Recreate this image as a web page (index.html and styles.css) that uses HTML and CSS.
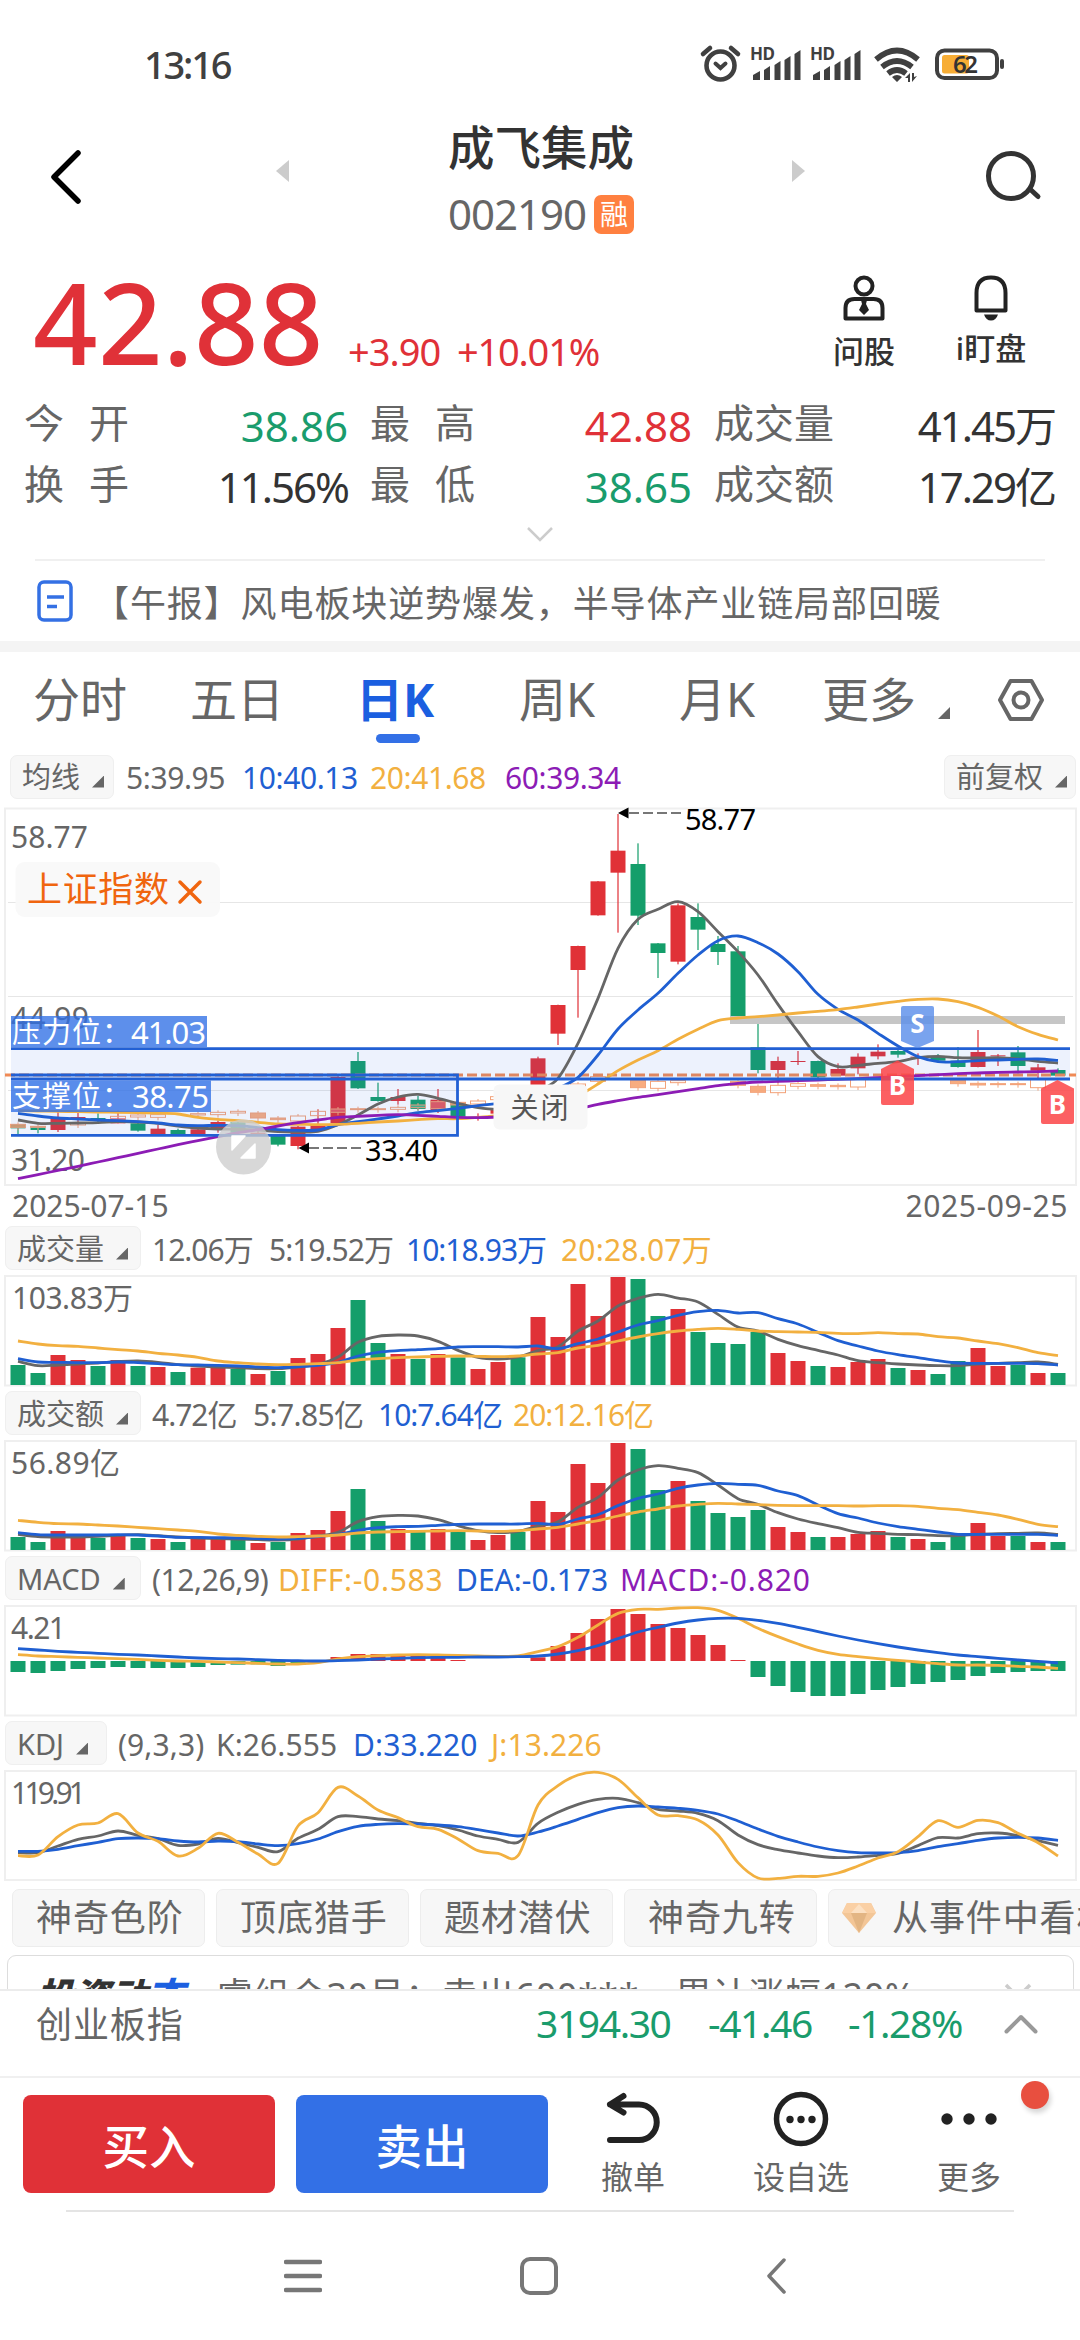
FILE: index.html
```html
<!DOCTYPE html>
<html lang="zh-CN">
<head>
<meta charset="utf-8">
<title>成飞集成 002190</title>
<link rel="stylesheet" href="styles.css">
</head>
<body>
<div class="status">
  <span class="clock">13:16</span>
  <svg class="status-icons" viewBox="690 35 330 60" width="330" height="60">
    <g fill="none" stroke="#404040" stroke-width="4.6" stroke-linecap="round">
      <circle cx="720.5" cy="65.5" r="14"/>
      <path d="M715.5 63.5l5 4.5 5-4.5" stroke-width="4"/>
      <path d="M703 54l7-6M738 54l-7-6"/>
    </g>
    <g id="signal" fill="#404040">
      <path d="M753 80v-5l7-4v9zM764 80v-10l6-4v14zM774.500 80V65l6-4v19zM784.500 80V60l6-4v24zM794.500 80V54l6-4v30z"/>
      <path d="M813 80v-5l7-4v9zM824 80v-10l6-4v14zM834.500 80V65l6-4v19zM844.500 80V60l6-4v24zM854.500 80V54l6-4v30z"/>
    </g>
    <text class="hd" x="750" y="60" textLength="25">HD</text>
    <text class="hd" x="810" y="60" textLength="25">HD</text>
    <g fill="none" stroke="#404040" stroke-width="5.600">
      <path d="M876 59.500q21-18 42 0"/><path d="M882 67q15-12 30 0"/><path d="M888 73.500q9-7 18 0"/>
    </g>
    <path fill="#404040" d="M892 77q5-4 10 0l-5 5zM905 78l5-5v9h-2v-4zM917 76l-5 6v-9h2v4z"/>
    <rect x="937" y="50.500" width="60" height="27.500" rx="7.500" fill="none" stroke="#404040" stroke-width="4"/>
    <rect x="942" y="55" width="27" height="18.500" rx="2.500" fill="#f7ad35"/>
    <rect x="1000" y="59" width="4" height="10" rx="2" fill="#404040"/>
    <text class="battery" x="953" y="73" textLength="25">62</text>
  </svg>
</div>

<header class="head">
  <svg class="back" viewBox="0 0 36 56" width="36" height="56"><path d="M29 4L5 28l24 24" fill="none" stroke="#000" stroke-width="5.500" stroke-linecap="round" stroke-linejoin="round"/></svg>
  <svg class="prev" viewBox="0 0 13 22" width="13" height="22"><path d="M13 0v22L0 11z" fill="#ccc"/></svg>
  <div class="name">
    <h1>成飞集成</h1>
    <div class="code"><span>002190</span><b>融</b></div>
  </div>
  <svg class="next" viewBox="0 0 13 22" width="13" height="22"><path d="M0 0v22l13-11z" fill="#ccc"/></svg>
  <svg class="search" viewBox="0 0 60 56" width="60" height="56"><g fill="none" stroke="#333" stroke-width="5" stroke-linecap="round"><circle cx="27" cy="27" r="22.500"/><path d="M47 41l7 6.500"/></g></svg>
</header>

<section class="price">
  <span class="last">42.88</span>
  <span class="chg c1">+3.90</span>
  <span class="chg c2">+10.01%</span>
  <div class="tool">
    <svg viewBox="0 0 46 46" width="46" height="46"><g fill="none" stroke="#222" stroke-width="4"><circle cx="23" cy="11" r="8.500"/><path d="M4.500 43.500V33q0-9 9-9h19q9 0 9 9v10.500z" stroke-linejoin="round"/></g><path fill="#222" d="M20 25h6l-1 4 3 6-5 5-5-5 3-6z"/></svg>
    <span>问股</span>
  </div>
  <div class="tool t2">
    <svg viewBox="0 0 46 46" width="46" height="46"><path d="M8.500 35.500V18q0-15.500 14.500-15.500T37.500 18v17.500z" fill="none" stroke="#222" stroke-width="4" stroke-linejoin="round"/><path d="M16 39.500h14q-2 6-7 6t-7-6z" fill="#222"/></svg>
    <span>i盯盘</span>
  </div>
</section>

<section class="stats">
  <span class="lab wide">今开</span><span class="val down">38.86</span>
  <span class="lab wide">最高</span><span class="val up">42.88</span>
  <span class="lab">成交量</span><span class="val">41.45万</span>
  <span class="lab wide">换手</span><span class="val">11.56%</span>
  <span class="lab wide">最低</span><span class="val down">38.65</span>
  <span class="lab">成交额</span><span class="val">17.29亿</span>
</section>
<div class="expand"><svg viewBox="0 0 28 17" width="28" height="17"><path d="M2 2l12 12L26 2" fill="none" stroke="#ccc" stroke-width="2.500"/></svg></div>

<section class="news">
  <svg viewBox="0 0 36 42" width="36" height="42"><rect x="2" y="2" width="32" height="38" rx="5" fill="none" stroke="#3470e4" stroke-width="3.500"/><path d="M10 17h17M10 26.500h10" stroke="#3470e4" stroke-width="3.500"/></svg>
  <span>【午报】风电板块逆势爆发，半导体产业链局部回暖</span>
</section>

<nav class="tabs">
  <span>分时</span><span>五日</span><span class="on">日K</span><span>周K</span><span>月K</span><span class="more">更多<i class="tri"></i></span>
  <svg viewBox="0 0 48 44" width="48" height="44"><g fill="none" stroke="#666" stroke-width="4" stroke-linejoin="round"><path d="M13.500 3h21L45 22 34.500 41h-21L3 22z"/><circle cx="24" cy="22" r="7.500"/></g></svg>
</nav>

<div class="legend ma">
  <span class="tag">均线<i class="tri"></i></span>
  <span>5:39.95</span><span class="blue">10:40.13</span><span class="gold">20:41.68</span><span class="purple">60:39.34</span>
  <span class="tag right">前复权<i class="tri"></i></span>
</div>

<svg class="chart" viewBox="0 807 1080 380" width="1080" height="380">
  <rect x="5" y="808.500" width="1071" height="376.500" class="frame"/>
  <path class="grid" d="M8 902.500H1073M8 996.500H1073M8 1090.500H1073"/>
  <text class="axis" x="11" y="848" textLength="77">58.77</text>
  <text class="axis" x="11" y="1029" textLength="78">44.99</text>
  <text class="axis" x="11" y="1171" textLength="74">31.20</text>
  <g id="candles"></g>
  <g id="index-candles"></g>
  <path d="M5 1075H1076" stroke="#ef8a55" stroke-width="3" stroke-dasharray="10 4"/>
  <rect x="730" y="1016" width="335" height="8" fill="#c6c6c6"/>
  <rect x="11" y="1049" width="1059" height="30" class="zone"/>
  <rect x="11" y="1079" width="446" height="56" class="zone"/>
  <g id="ma-lines"></g>
  <path class="level" d="M11 1048.700H1070M11 1079H1070M11 1075H457.500V1135.300H11"/>
  <rect x="11" y="1016" width="196" height="31" class="badge-bg"/>
  <text class="badge-tx" x="12" y="1042.500" textLength="119">压力位：</text><text class="badge-tx num" x="131" y="1044" textLength="75">41.03</text>
  <rect x="11" y="1080.500" width="200" height="31.500" class="badge-bg"/>
  <text class="badge-tx" x="12" y="1107" textLength="119">支撑位：</text><text class="badge-tx num" x="132" y="1108" textLength="77">38.75</text>
  <rect x="15.500" y="862" width="204.500" height="55" rx="9" fill="#f9f9f9" fill-opacity=".95"/>
  <text class="overlay" x="27" y="902" textLength="142">上证指数</text>
  <path d="M180 882l20 20M200 882l-20 20" stroke="#f0650f" stroke-width="3.500" stroke-linecap="round"/>
  <path d="M618 813l10.500-5.500v11zM298.500 1148l10.500-5.500v11z"/>
  <path d="M629 813H681M309 1148H361" stroke="#777" stroke-width="1.800" stroke-dasharray="10 4"/>
  <text class="mark" x="685" y="830" textLength="71">58.77</text>
  <text class="mark" x="365" y="1161" textLength="73">33.40</text>
  <rect x="493.500" y="1084.500" width="94" height="45" rx="6" fill="#f7f7f7"/>
  <text class="close" x="510.500" y="1117.500" textLength="58">关闭</text>
  <circle cx="243.500" cy="1147" r="27.500" fill="#cdcdcd" fill-opacity=".78"/>
  <path d="M232 1136h13l-13 14zM255 1144v14h-14z" fill="#fff" stroke="#fff" stroke-width="1.500" stroke-linejoin="round"/>
  <path d="M901 1008q0-2 2-2h29q2 0 2 2v33l-16.500 7-16.500-7z" fill="#5b8fea" fill-opacity=".82"/>
  <text class="flag" x="917.500" y="1033">S</text>
  <path d="M881 1069l16.500-8.500 16.500 8.500v34q0 2-2 2h-29q-2 0-2-2z" fill="#fb4648" fill-opacity=".86"/>
  <text class="flag" x="897.500" y="1095">B</text>
  <path d="M1041 1088.500l16.500-8.500 16.500 8.500v33.500q0 2-2 2h-29q-2 0-2-2z" fill="#fb4648" fill-opacity=".86"/>
  <text class="flag" x="1057.500" y="1114">B</text>
</svg>
<div class="dates"><span>2025-07-15</span><span class="d2">2025-09-25</span></div>

<div class="legend vol">
  <span class="tag">成交量<i class="tri"></i></span>
  <span>12.06万</span><span>5:19.52万</span><span class="blue">10:18.93万</span><span class="gold">20:28.07万</span>
</div>
<svg class="chart" viewBox="0 1275 1080 112" width="1080" height="112">
  <rect x="5" y="1276" width="1071" height="109.500" class="frame"/>
  <g id="vol"></g>
  <text class="axis" x="12" y="1308.500" textLength="121">103.83万</text>
</svg>

<div class="legend amt">
  <span class="tag">成交额<i class="tri"></i></span>
  <span>4.72亿</span><span>5:7.85亿</span><span class="blue">10:7.64亿</span><span class="gold">20:12.16亿</span>
</div>
<svg class="chart" viewBox="0 1440 1080 112" width="1080" height="112">
  <rect x="5" y="1441" width="1071" height="109.500" class="frame"/>
  <g id="amt"></g>
  <text class="axis" x="11" y="1473.500" textLength="109">56.89亿</text>
</svg>

<div class="legend macd">
  <span class="tag">MACD<i class="tri"></i></span>
  <span>(12,26,9)</span><span class="gold">DIFF:-0.583</span><span class="blue">DEA:-0.173</span><span class="purple">MACD:-0.820</span>
</div>
<svg class="chart" viewBox="0 1605 1080 112" width="1080" height="112">
  <rect x="5" y="1606" width="1071" height="109.500" class="frame"/>
  <g id="macd"></g>
  <text class="axis" x="11" y="1638.500" textLength="55">4.21</text>
</svg>

<div class="legend kdj">
  <span class="tag">KDJ<i class="tri"></i></span>
  <span>(9,3,3)</span><span>K:26.555</span><span class="blue">D:33.220</span><span class="gold">J:13.226</span>
</div>
<svg class="chart" viewBox="0 1770 1080 112" width="1080" height="112">
  <rect x="5" y="1771" width="1071" height="109" class="frame"/>
  <g id="kdj"></g>
  <text class="axis" x="11" y="1803.500" textLength="75">119.91</text>
</svg>

<div class="chips">
  <span>神奇色阶</span><span>顶底猎手</span><span>题材潜伏</span><span>神奇九转</span>
  <span class="gem"><svg viewBox="0 0 34 30" width="34" height="30"><path d="M5 0h24l5 10-17 20L0 10z" fill="#f3c697"/><path d="M5 0h24l5 10H0z" fill="#fad0a5"/><path d="M9 10h16l-8 20z" fill="#e3b583"/><path d="M9 10L17 1l8 9z" fill="#fce0c2"/></svg>从事件中看机会</span>
</div>

<div class="feed"><div class="card">
  <b>投资动<em>态</em></b><span>睿组合30号：卖出600***，累计涨幅120%</span>
  <svg viewBox="0 0 28 17" width="28" height="17"><path d="M2 2l12 12L26 2" fill="none" stroke="#ccc" stroke-width="3.500"/></svg>
</div></div>

<div class="ticker">
  <span class="who">创业板指</span><span class="n1">3194.30</span><span class="n2">-41.46</span><span class="n3">-1.28%</span>
  <svg viewBox="0 0 34 20" width="34" height="20"><path d="M2.500 17.500L17 3l14.500 14.500" fill="none" stroke="#999" stroke-width="4" stroke-linecap="round" stroke-linejoin="round"/></svg>
</div>

<footer class="actions">
  <button class="buy">买入</button><button class="sell">卖出</button>
  <div class="act a1"><svg viewBox="0 0 56 56" width="56" height="56"><path d="M18.500 5L5 13.500l13.500 8M5 13.500h29a17.500 17.500 0 0 1 0 35.500H5" fill="none" stroke="#222" stroke-width="6" stroke-linecap="round" stroke-linejoin="round"/></svg><span>撤单</span></div>
  <div class="act a2"><svg viewBox="0 0 56 56" width="56" height="56"><circle cx="28" cy="28" r="24.500" fill="none" stroke="#222" stroke-width="5.500"/><g fill="#222"><circle cx="17" cy="28.500" r="3.700"/><circle cx="28" cy="28.500" r="3.700"/><circle cx="39" cy="28.500" r="3.700"/></g></svg><span>设自选</span></div>
  <div class="act a3"><svg viewBox="0 0 56 56" width="56" height="56"><g fill="#222"><circle cx="6" cy="28" r="5.700"/><circle cx="28" cy="28" r="5.700"/><circle cx="50" cy="28" r="5.700"/></g></svg><span>更多</span><i class="dot"></i></div>
</footer>
<div class="sysnav">
  <svg viewBox="0 0 38 34" width="38" height="34"><path d="M2 3h34M2 17h34M2 31h34" stroke="#777" stroke-width="4.500" stroke-linecap="round"/></svg>
  <svg viewBox="0 0 38 38" width="38" height="38"><rect x="2" y="2" width="34" height="34" rx="8" fill="none" stroke="#777" stroke-width="4"/></svg>
  <svg viewBox="0 0 20 36" width="20" height="36"><path d="M18 2L3 18l15 16" fill="none" stroke="#777" stroke-width="3.500" stroke-linecap="round" stroke-linejoin="round"/></svg>
</div>
<script src="chart.js"></script>
</body>
</html>
```
FILE: styles.css
```css
* { box-sizing: border-box; }
body {
  margin: 0; width: 1080px; height: 2340px; overflow: hidden; background: #fff; color: #666;
  font-family: "Noto Sans", "Noto Sans CJK SC", sans-serif;
  display: flex; flex-direction: column;
}
body > * { flex: none; }
svg { display: block; }
h1, button { margin: 0; font: inherit; }
.up { color: #e03138; }
.down { color: #1a9c6c; }
.blue { color: #1f5fd2; }
.gold { color: #f2b040; }
.purple { color: #8c1cb5; }
.tri { width: 12px; height: 12px; background: #666; clip-path: polygon(100% 0, 100% 100%, 0 100%); }

.status { height: 105px; padding: 35px 60px 0 144px; display: flex; justify-content: space-between; }
.clock { font-size: 38px; line-height: 58px; font-weight: 500; color: #404040; letter-spacing: -2.200px; }
.hd { font-size: 17px; font-weight: 700; fill: #404040; }
.battery { font-size: 24px; font-weight: 600; fill: #333; }

.head { height: 145px; display: grid; grid-template-columns: 276px 172px 186px 158px 1fr; }
.back { margin: 44px 0 0 49px; }
.prev, .next { margin-top: 55px; }
.next { grid-column: 5; grid-row: 1; }
.search { grid-column: 5; grid-row: 1; margin: 44px 0 0 192px; }
.name h1 { font-size: 46.500px; line-height: 60px; font-weight: 500; color: #333; margin-top: 12px; white-space: nowrap; }
.code { display: flex; align-items: center; gap: 8px; height: 50px; margin-top: 12px; line-height: 50px; font-size: 42px; }
.code span { letter-spacing: -1px; width: 138px; }
.code b { width: 40px; height: 39px; border-radius: 7px; background: #ff8040; color: #fff; font-size: 28px; line-height: 38px; font-weight: 400; text-align: center; }

.price { height: 142px; padding-left: 33px; display: flex; color: #e03138; white-space: nowrap; }
.last { width: 315px; font-size: 113px; line-height: 142px; font-weight: 500; letter-spacing: .3px; }
.chg { font-size: 38px; line-height: 203px; letter-spacing: -1px; }
.c1 { width: 109px; }
.c2 { width: 361px; letter-spacing: -1.200px; }
.tool { width: 92px; padding-top: 25px; display: flex; flex-direction: column; align-items: center; color: #333; font-size: 31px; line-height: 40px; font-weight: 500; }
.tool span { margin-top: 10px; }
.t2 { margin-left: 35px; }
.t2 span { margin-top: 7px; }

.stats { height: 122px; padding-left: 24px; display: grid; grid-template-columns: 130px 194px 22px 130px 192px 22px 124px 217px; grid-template-rows: 61px 61px; line-height: 61px; white-space: nowrap; }
.stats .lab { font-size: 40px; }
.stats .wide { letter-spacing: 25px; }
.stats .val { font-size: 42px; text-align: right; padding-top: 3px; }
.stats .val:not(.up):not(.down) { color: #333; letter-spacing: -2px; }
.stats span:nth-child(6n+3) { grid-column: 4; }
.stats span:nth-child(6n+5) { grid-column: 7; }

.expand { height: 47px; margin: 0 35px; border-bottom: 2px solid #f0f0f0; display: flex; justify-content: center; padding-top: 12px; }
.news { height: 91px; border-bottom: 11px solid #f4f4f4; box-sizing: border-box; padding-left: 37px; display: flex; align-items: center; gap: 20px; font-size: 36px; letter-spacing: .9px; white-space: nowrap; }

.tabs { height: 103px; padding: 17px 0 0 33px; display: grid; grid-template-columns: 157px 166px 163px 160px 143px 175px 1fr; font-size: 47px; line-height: 60px; white-space: nowrap; }
.tabs svg { margin-top: 9px; }
.tabs .on { font-weight: 700; color: #1b5fe0; display: flex; flex-direction: column; }
.tabs .on::after { content: ""; width: 44px; height: 9px; border-radius: 5px; background: #3370e6; margin: 5px 0 0 20px; }
.tabs .more { display: flex; align-items: flex-end; gap: 22px; height: 50px; line-height: 40px; }

.legend { height: 44px; display: grid; align-items: center; font-size: 30px; line-height: 40px; letter-spacing: -.4px; white-space: nowrap; }
.legend > span:not(.tag) { padding-top: 4px; }
.tag { display: flex; align-items: center; gap: 12px; height: 44px; padding: 2px 0 0 11px; border: 1px solid #efefef; border-radius: 7px; background: #f7f7f7; font-size: 29px; letter-spacing: 0; }
.tag .tri { margin-top: 9px; }
.ma { margin: 0 0 8px 10px; grid-template-columns: 104px 116px 128px 135px 451px 132px; }
.ma > span:nth-child(n+2):nth-child(-n+5) { margin-left: 12px; padding-top: 2px; }
.ma .tag { padding-top: 0; }
.vol, .amt, .macd, .kdj { margin: 0 0 5px 5px; }
.vol { grid-template-columns: 136px 117px 137px 155px 1fr; }
.vol > span:nth-child(n+2), .amt > span:nth-child(n+2), .macd > span:nth-child(n+2), .kdj > span:nth-child(n+2) { margin-left: 11px; }
.amt { grid-template-columns: 136px 101px 125px 135px 1fr; }
.macd { grid-template-columns: 136px 126px 178px 164px 1fr; }
.kdj { grid-template-columns: 102px 98px 137px 138px 1fr; letter-spacing: .1px; }
.vol, .amt { letter-spacing: -1px; }
.vol .gold { letter-spacing: .2px; }
.amt span:nth-child(3) { letter-spacing: -.6px; }
.macd .gold { letter-spacing: .7px; }
.macd .blue { letter-spacing: 0; }
.macd .purple { letter-spacing: .9px; }
.chart + .legend { margin-top: 4px; }

.frame { fill: #fff; stroke: #efefef; stroke-width: 2; }
.grid { fill: none; stroke: #e6e6e6; }
.axis { font-size: 30px; fill: #666; }
.zone { fill: #3370e6; fill-opacity: .09; }
.level { fill: none; stroke: #2260d4; stroke-width: 2.800; }
.badge-bg { fill: #2f6fe6; fill-opacity: .78; }
.badge-tx { font-size: 29px; fill: #fff; }
.badge-tx.num { font-size: 31px; }
.overlay { font-size: 35px; fill: #f0650f; }
.mark { font-size: 29px; fill: #000; }
.close { font-size: 28px; fill: #555; }
.flag { font-size: 26px; font-weight: 700; fill: #fff; text-anchor: middle; }
.line { fill: none; stroke-width: 2.800; stroke-linejoin: round; }
.dates { height: 39px; padding: 0 12px; display: flex; justify-content: space-between; font-size: 30px; line-height: 38px; letter-spacing: 0; }
.d2 { letter-spacing: .6px; }

.chips { margin: 7px 0 0 12px; display: flex; gap: 11px; width: 1068px; overflow: hidden; }
.chips span { flex: none; width: 193px; height: 58px; padding-left: 23px; border: 1px solid #ededed; border-radius: 7px; background: #f7f7f7; font-size: 36px; line-height: 56px; letter-spacing: .9px; white-space: nowrap; }
.chips .gem { width: 330px; padding-left: 13px; display: flex; align-items: center; gap: 16px; }

.feed { height: 44px; padding: 8px 6px 0 7px; overflow: hidden; border-bottom: 2px solid #ececec; }
.card { height: 90px; border: 1.500px solid #ddd; border-radius: 9px; padding: 14px 0 0 28px; display: flex; font-size: 36px; line-height: 52px; white-space: nowrap; }
.card b { width: 181px; font-weight: 900; font-style: italic; color: #333; font-size: 37px; }
.card em { color: #1b5fe0; }
.card span { width: 787px; letter-spacing: .5px; }
.card svg { margin-top: 13px; }

.ticker { height: 87px; padding: 1px 0 0 36px; border-bottom: 2px solid #f0f0f0; display: grid; grid-template-columns: 500px 172px 140px 156px 1fr; font-size: 36px; line-height: 60px; color: #1a9c6c; white-space: nowrap; }
.who { color: #666; letter-spacing: .9px; padding-top: 3px; }
.n1, .n2, .n3 { font-size: 39px; letter-spacing: -1.400px; padding-top: 1px; }
.ticker svg { margin-top: 22px; }

.actions { height: 132px; margin: 0 23px; padding-top: 17px; display: flex; position: relative; }
.actions button { width: 252px; height: 98px; margin-right: 21px; border: 0; border-radius: 8px; background: #e03137; color: #fff; font-size: 46.500px; font-weight: 500; }
.actions .sell { background: #3370e6; }
.act { display: flex; flex-direction: column; align-items: center; width: 100px; margin-top: -4px; font-size: 32px; line-height: 40px; }
.act span { margin-top: 10px; white-space: nowrap; }
.a1 { margin-left: 14px; }
.a2 { margin-left: 68px; }
.a3 { margin-left: 68px; }
.dot { position: absolute; right: 8px; top: 3px; width: 28px; height: 28px; border-radius: 50%; background: #e84f3f; box-shadow: 2px 4px 5px rgba(0,0,0,.16); }
.sysnav { height: 130px; margin: 0 66px; border-top: 2px solid #e4e4e4; padding-left: 218px; display: flex; align-items: center; }
.sysnav svg:nth-child(2) { margin: 0 208px 0 198px; }
```
FILE: chart.js
```js
// Pixel pitch of the shared time axis.
const X0 = 18, STEP = 20, BODY = 15;
const RED = '#e03137', GREEN = '#149e6a', GRAY = '#666', BLUE = '#1f5fd2', GOLD = '#f2b040', PURPLE = '#8c1cb5';
const UP = '00110101011010111001010110111110010000110111010011010'
  .split('').map(c => c === '1');
const NS = 'http://www.w3.org/2000/svg';
const x = i => X0 + STEP * i;

function add(g, tag, attrs) {
  const el = document.createElementNS(NS, tag);
  for (const k in attrs) el.setAttribute(k, attrs[k]);
  g.appendChild(el);
}
function rect(g, i, top, bottom, attrs) {
  add(g, 'rect', Object.assign({ x: x(i) - BODY / 2, y: top, width: BODY, height: Math.max(bottom - top, 1) }, attrs));
}
function line(g, base, values, color) {
  const p = values.map((v, i) => [x(i), base + v / 3]);
  let d = `M${p[0]}`;
  for (let i = 0; i < p.length - 1; i++) {
    const a = p[i - 1] || p[i], b = p[i], c = p[i + 1], e = p[i + 2] || c;
    d += `C${b[0] + (c[0] - a[0]) / 6},${b[1] + (c[1] - a[1]) / 6} ${c[0] - (e[0] - b[0]) / 6},${c[1] - (e[1] - b[1]) / 6} ${c}`;
  }
  add(g, 'path', { d, class: 'line', stroke: color });
}
const $ = id => document.getElementById(id);

// body top, body bottom, wick top, wick bottom
const K = [[1003,1015,1003,1035],[1012,1020,1008,1030],[985,1020,960,1026],[981,983,965,1005],[984,987,970,1000],[985,1000,962,1000],[1000,1022,998,1025],[1016,1032,1005,1036],[1020,1032,1016,1035],[1018,1033,1012,1035],[996,1020,992,1028],[997,1028,995,1035],[1028,1034,1020,1037],[1038,1064,1036,1069],[1010,1068,1008,1078],[1003,1018,958,1020],[861,1000,858,1006],[813,895,786,897],[921,933,878,935],[921,933,897,944],[929,957,918,962],[929,963,897,969],[940,980,938,982],[982,985,970,992],[957,971,950,975],[930,945,925,950],[805,888,800,892],[645,731,644,765],[468,540,467,683],[274,376,273,377],[182,248,72,428],[222,377,160,405],[460,489,459,564],[346,515,340,523],[381,419,340,480],[462,486,438,525],[484,680,468,681],[772,840,702,850],[813,840,800,880],[813,816,783,825],[813,862,812,865],[837,857,820,858],[800,835,790,853],[785,799,763,808],[783,794,775,803],[800,802,790,825],[800,812,792,815],[812,831,771,833],[786,831,720,832],[796,798,792,828],[787,828,768,850],[832,842,822,865],[840,857,835,858]];
K.forEach(([t, b, h, l], i) => {
  const c = UP[i] ? RED : GREEN;
  add($('candles'), 'rect', { x: x(i) - .6, y: 790 + h / 3, width: 1.2, height: (l - h) / 3, fill: c });
  rect($('candles'), i, 790 + t / 3, 790 + b / 3, { fill: c });
});

// index, top, bottom, filled
const IDX = [[0,1003,1012,1],[1,1009,1012,1],[3,1000,1005,0],[5,979,990,0],[6,975,981,0],[7,974,982,0],[9,971,975,0],[10,967,974,0],[11,964,969,0],[12,969,984,1],[13,984,989,1],[14,978,993,0],[15,964,977,0],[16,957,967,0],[17,956,959,0],[18,956,959,0],[19,952,958,0],[20,945,953,0],[21,935,956,0],[22,937,945,1],[23,933,942,0],[24,920,929,0],[28,882,892,0],[29,860,874,0],[31,870,893,1],[32,874,895,0],[33,872,878,0],[36,874,886,1],[37,889,907,1],[38,886,908,0],[39,881,889,0],[40,884,889,1],[41,886,890,1],[42,868,891,0],[47,870,881,1],[48,880,885,1],[49,881,884,1],[50,881,884,1],[51,868,893,0]];
IDX.forEach(([i, t, b, f]) => {
  const g = $('index-candles');
  add(g, 'path', { d: `M${x(i)} ${790 + t / 3 - 2}V${790 + t / 3}M${x(i)} ${790 + b / 3}v3`, stroke: '#f2a27a', 'stroke-width': 1 });
  rect(g, i, 790 + t / 3, 790 + b / 3, { fill: f ? '#f79d68' : '#fff', 'fill-opacity': f ? .85 : .2, stroke: '#f2a27a', 'stroke-width': 1 });
});

const m = $('ma-lines');
line(m, 790, [990,1000,1000,999,998,995,996,1000,1008,1014,1017,1018,1020,1025,1026,1024,1004,975,942,921,913,925,940,953,958,950,905,865,760,625,475,388,358,335,365,425,485,555,643,725,800,830,826,820,815,803,799,803,804,803,807,814,819], GRAY);
line(m, 790, [970,978,984,987,990,992,995,999,1005,1007,1006,1007,1013,1019,1021,1020,1004,995,987,978,968,962,955,947,940,935,925,895,862,795,717,660,610,550,495,452,438,458,492,545,613,658,690,730,768,800,815,815,812,810,808,807,811], BLUE);
line(m, 790, [962,963,964,965,966,967,968,969,972,982,988,992,997,1002,1003,1004,1003,1000,996,993,989,986,986,982,976,970,960,945,918,882,842,810,782,748,718,692,684,680,675,669,664,659,651,642,634,628,627,635,652,678,710,733,750], GOLD);
line(m, 790, [1166,1154,1141,1129,1116,1103,1090,1077,1064,1052,1040,1028,1019,1008,998,990,982,979,976,974,976,979,982,983,981,977,971,965,957,943,932,922,914,905,896,887,880,876,874,872,870,868,866,863,860,857,854,851,849,847,846,845,843], PURPLE);

function bars(id, base, floor, tops) {
  tops.forEach((t, i) => rect($(id), i, base + t / 3, base + floor / 3, { fill: UP[i] ? RED : GREEN }));
}
bars('vol', 1220, 495, [435,459,405,420,438,420,438,441,456,443,441,447,462,453,414,402,324,240,369,402,417,402,412,447,426,412,291,351,192,288,171,177,288,267,336,369,372,336,399,423,438,441,426,417,444,450,462,423,384,438,435,459,459]);
line($('vol'), 1220, [424,437,435,432,429,425,423,427,434,438,441,443,446,446,441,433,411,367,349,345,348,364,391,412,417,411,392,380,333,303,258,235,223,234,246,283,321,333,358,377,391,405,422,428,432,435,437,437,432,430,428,426,433], GRAY);
line($('vol'), 1220, [416,426,427,428,428,426,428,431,434,435,436,438,441,443,440,436,427,408,397,392,389,386,381,380,380,381,378,386,371,357,336,315,302,286,275,271,279,278,296,312,337,362,378,393,404,413,422,429,430,430,430,431,435], BLUE);
line($('vol'), 1220, [363,372,377,379,384,389,393,400,405,412,423,428,432,434,433,431,428,420,416,413,411,409,408,409,410,408,402,398,384,376,363,351,341,333,328,325,328,333,335,336,337,340,341,338,341,342,350,354,363,371,383,398,407], GOLD);

bars('amt', 1220, 990, [951,966,933,950,954,948,954,957,966,957,957,959,969,966,939,930,873,807,903,927,935,927,936,960,945,936,843,876,732,789,669,687,810,783,843,879,891,870,921,936,951,951,942,933,951,957,966,948,909,948,948,966,966]);
line($('amt'), 1220, [943,950,951,951,949,946,944,947,951,954,956,957,959,960,957,948,937,905,890,886,888,899,917,932,938,934,918,905,862,832,780,750,737,745,758,795,836,853,878,897,911,923,937,940,943,944,947,947,943,941,940,939,943], GRAY);
line($('amt'), 1220, [938,944,945,945,945,944,945,948,952,952,953,954,956,957,955,950,943,931,923,920,919,916,913,912,912,912,910,913,897,884,857,835,822,805,795,790,793,796,813,827,855,881,894,909,920,928,936,943,943,943,943,943,946], BLUE);
line($('amt'), 1220, [901,907,911,912,915,918,922,926,930,934,942,946,949,951,950,948,945,939,936,935,934,933,932,933,934,932,927,922,912,902,888,876,867,858,853,850,852,854,856,857,857,857,858,857,857,859,865,869,877,885,898,913,920], GOLD);

const ZERO = 333;
[366,369,363,357,354,351,354,354,354,351,345,344,343,348,345,333,321,312,312,312,314,318,330,333,333,333,322,288,249,207,177,192,222,234,255,285,330,381,408,426,438,438,432,420,411,402,396,390,378,369,366,363,363].forEach((v, i) => {
  if (v !== ZERO) rect($('macd'), i, 1550 + Math.min(v, ZERO) / 3, 1550 + Math.max(v, ZERO) / 3, { fill: v < ZERO ? RED : GREEN });
});
line($('macd'), 1550, [314,318,320,322,324,326,328,331,333,334,336,338,340,342,342,338,327,320,317,315,314,315,316,318,319,318,305,290,262,225,190,178,178,174,173,181,205,235,260,282,301,313,320,326,331,336,341,345,345,346,349,351,355], GOLD);
line($('macd'), 1550, [296,300,304,307,310,313,315,318,321,324,326,327,329,331,332,333,332,330,327,325,323,322,322,321,321,320,318,312,302,287,266,246,232,219,210,205,205,211,220,232,245,258,270,281,291,300,308,315,320,325,330,334,339], BLUE);

line($('kdj'), 1550, [908,908,888,868,858,843,856,866,886,882,865,878,892,905,865,838,800,800,807,812,820,827,840,858,868,877,820,787,763,748,745,758,778,783,790,812,855,884,899,909,918,923,921,916,910,887,863,864,851,849,857,872,886], GRAY);
line($('kdj'), 1550, [904,904,898,887,877,866,864,866,873,876,873,875,882,887,881,867,845,829,823,821,822,825,830,839,849,858,846,828,808,788,773,768,771,775,781,792,813,837,859,876,891,902,908,909,908,902,890,881,871,864,862,864,871], BLUE);
line($('kdj'), 1550, [917,915,860,825,819,791,849,874,918,895,850,877,912,940,828,788,712,738,780,803,830,838,867,902,910,917,765,707,675,667,688,743,795,797,810,855,938,984,985,979,979,969,948,924,905,860,812,832,811,818,850,878,918], GOLD);
```
